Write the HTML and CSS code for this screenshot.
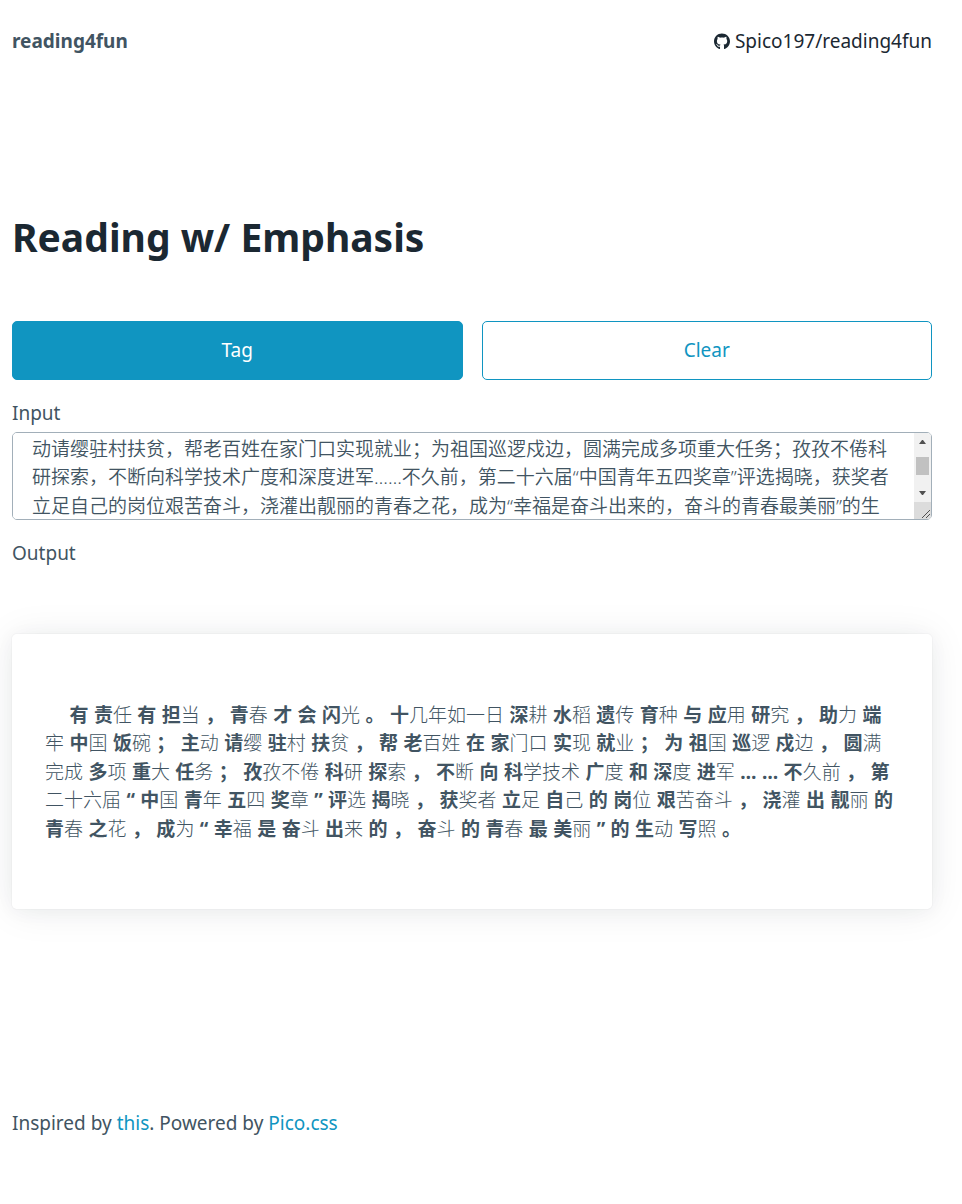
FILE: index.html
```html
<!DOCTYPE html>
<html lang="zh-CN">
<head>
<meta charset="utf-8">
<meta name="viewport" content="width=device-width, initial-scale=1">
<title>reading4fun</title>
<link rel="stylesheet" href="styles.css">
</head>
<body>
<nav class="nav">
  <strong class="brand">reading4fun</strong>
  <a class="repo" href="#repo">
    <svg class="repo-icon" viewBox="0 0 496 512" aria-hidden="true"><path fill="currentColor" d="M165.900 397.400c0 2-2.300 3.600-5.200 3.600-3.300.3-5.600-1.300-5.600-3.600 0-2 2.300-3.600 5.200-3.600 3-.3 5.600 1.300 5.600 3.600zM244.800 8C106.100 8 0 113.300 0 252c0 110.900 69.800 205.800 169.500 239.200 12.800 2.300 17.300-5.600 17.300-12.100 0-6.200-.3-40.400-.3-61.400 0 0-70 15-84.700-29.800 0 0-11.400-29.100-27.800-36.600 0 0-22.900-15.700 1.600-15.400 0 0 24.900 2 38.600 25.800 21.900 38.600 58.600 27.500 72.900 20.900 2.300-16 8.800-27.100 16-33.700-55.900-6.200-112.300-14.300-112.300-110.500 0-27.500 7.600-41.300 23.600-58.900-2.600-6.500-11.100-33.300 2.600-67.900 20.900-6.500 69 27 69 27 20-5.600 41.500-8.500 62.800-8.500s42.800 2.900 62.800 8.500c0 0 48.100-33.600 69-27 13.700 34.700 5.200 61.400 2.600 67.900 16 17.700 25.800 31.500 25.800 58.900 0 96.500-58.900 104.200-114.800 110.500 9.200 7.900 17 22.900 17 46.400 0 33.700-.3 75.400-.3 83.600 0 6.500 4.600 14.400 17.300 12.100C428.200 457.800 496 362.900 496 252 496 113.300 383.500 8 244.800 8z"/></svg>
    <span>Spico197/reading4fun</span>
  </a>
</nav>
<main class="main">
  <h1 class="title">Reading w/ Emphasis</h1>
  <div class="actions">
    <button class="button" type="button">Tag</button>
    <button class="button outline" type="button">Clear</button>
  </div>
  <label class="label" for="input">Input</label>
  <div class="field">
    <textarea class="input" id="input" spellcheck="false">　有责任有担当，青春才会闪光。十几年如一日深耕水稻遗传育种与应用研究，助力端牢中国饭碗；主动请缨驻村扶贫，帮老百姓在家门口实现就业；为祖国巡逻戍边，圆满完成多项重大任务；孜孜不倦科研探索，不断向科学技术广度和深度进军……不久前，第二十六届“中国青年五四奖章”评选揭晓，获奖者立足自己的岗位艰苦奋斗，浇灌出靓丽的青春之花，成为“幸福是奋斗出来的，奋斗的青春最美丽”的生动写照。</textarea>
    <svg class="scrollbar" viewBox="0 0 17 86" aria-hidden="true">
      <path fill="#f1f1f1" d="M0 0h17v69H0z"/>
      <path fill="#505050" d="M5 11l3-4h1l3 4zM5 58h7l-3 4H8z"/>
      <path fill="#c1c1c1" d="M2 24h13v18H2z"/>
      <path fill="#dcdcdc" d="M0 69h17v17H0z"/>
      <path fill="none" stroke="#505050" d="M8 85l8-8M12 85l4-4"/>
    </svg>
  </div>
  <p class="label">Output</p>
  <article class="card">　 <b>有</b> <b>责</b>任 <b>有</b> <b>担</b>当 <b>，</b> <b>青</b>春 <b>才</b> <b>会</b> <b>闪</b>光 <b>。</b> <b>十</b>几年如一日 <b>深</b>耕 <b>水</b>稻 <b>遗</b>传 <b>育</b>种 <b>与</b> <b>应</b>用 <b>研</b>究 <b>，</b> <b>助</b>力 <b>端</b>牢 <b>中</b>国 <b>饭</b>碗 <b>；</b> <b>主</b>动 <b>请</b>缨 <b>驻</b>村 <b>扶</b>贫 <b>，</b> <b>帮</b> <b>老</b>百姓 <b>在</b> <b>家</b>门口 <b>实</b>现 <b>就</b>业 <b>；</b> <b>为</b> <b>祖</b>国 <b>巡</b>逻 <b>戍</b>边 <b>，</b> <b>圆</b>满完成 <b>多</b>项 <b>重</b>大 <b>任</b>务 <b>；</b> <b>孜</b>孜不倦 <b>科</b>研 <b>探</b>索 <b>，</b> <b>不</b>断 <b>向</b> <b>科</b>学技术 <b>广</b>度 <b>和</b> <b>深</b>度 <b>进</b>军 <b>…</b> <b>…</b> <b>不</b>久前 <b>，</b> <b>第</b>二十六届 <b>“</b> <b>中</b>国 <b>青</b>年 <b>五</b>四 <b>奖</b>章 <b>”</b> <b>评</b>选 <b>揭</b>晓 <b>，</b> <b>获</b>奖者 <b>立</b>足 <b>自</b>己 <b>的</b> <b>岗</b>位 <b>艰</b>苦奋斗 <b>，</b> <b>浇</b>灌 <b>出</b> <b>靓</b>丽 <b>的</b> <b>青</b>春 <b>之</b>花 <b>，</b> <b>成</b>为 <b>“</b> <b>幸</b>福 <b>是</b> <b>奋</b>斗 <b>出</b>来 <b>的</b> <b>，</b> <b>奋</b>斗 <b>的</b> <b>青</b>春 <b>最</b> <b>美</b>丽 <b>”</b> <b>的</b> <b>生</b>动 <b>写</b>照 <b>。</b></article>
</main>
<footer class="footer">Inspired by <a href="#this">this</a>. Powered by <a href="#pico">Pico.css</a></footer>
<script src="script.js"></script>
</body>
</html>
```
FILE: styles.css
```css
* { box-sizing: border-box; }

body {
  margin: 0;
  padding: 0 30px 0 12px;
  background: #fff;
  color: #415462;
  font-family: "Noto Sans", "Noto Sans CJK SC", sans-serif;
  font-size: 19px;
  line-height: 1.5;
}

a { color: #1095c1; text-decoration: none; }

.nav {
  display: flex;
  justify-content: space-between;
  align-items: center;
  padding: 27px 0;
}

.brand { font-weight: 700; }

.repo {
  display: flex;
  align-items: center;
  gap: 5px;
  color: #1b2832;
}

.repo-icon { width: 16px; height: 17px; }

.main { padding: 127px 0 68px; }

.title {
  margin: 0 0 57px;
  color: #1b2832;
  font-size: 39px;
  font-weight: 700;
  line-height: 54px;
}

.actions {
  display: grid;
  grid-template-columns: 1fr 1fr;
  gap: 19px;
  margin-bottom: 19px;
}

.button {
  padding: 14px 19px;
  border: 1px solid #1095c1;
  border-radius: 5px;
  background: #1095c1;
  color: #fff;
  font: inherit;
  line-height: 29px;
}

.button.outline { background: transparent; color: #1095c1; }

.label { display: block; margin: 0 0 5px; }

.field { position: relative; margin-bottom: 19px; }

.input {
  display: block;
  width: 100%;
  height: 88px;
  margin: 0;
  padding: 14px 36px 14px 19px;
  border: 1px solid #a2afb9;
  border-radius: 5px;
  background: #fff;
  color: inherit;
  font: inherit;
  font-weight: 350;
  resize: none;
}

.scrollbar {
  position: absolute;
  top: 1px;
  right: 1px;
  width: 17px;
  height: 86px;
  border-radius: 0 4px 4px 0;
  pointer-events: none;
}

.card {
  margin: 66px 0;
  padding: 67px 34px 66px 33px;
  border-radius: 5px;
  box-shadow: 0 2px 19px rgba(27, 40, 50, 0.04), 0 2px 38px rgba(27, 40, 50, 0.08), 0 0 0 1px rgba(27, 40, 50, 0.024);
  font-family: "DejaVu Sans Condensed", "Noto Sans CJK SC", sans-serif;
  font-weight: 300;
}

.card b {
  font-family: "Noto Sans", "Noto Sans CJK SC", sans-serif;
  font-weight: 700;
  line-height: 1;
}

.footer { padding: 66px 0; }
```
FILE: script.js
```js
document.getElementById('input').scrollTop = 41;
```
